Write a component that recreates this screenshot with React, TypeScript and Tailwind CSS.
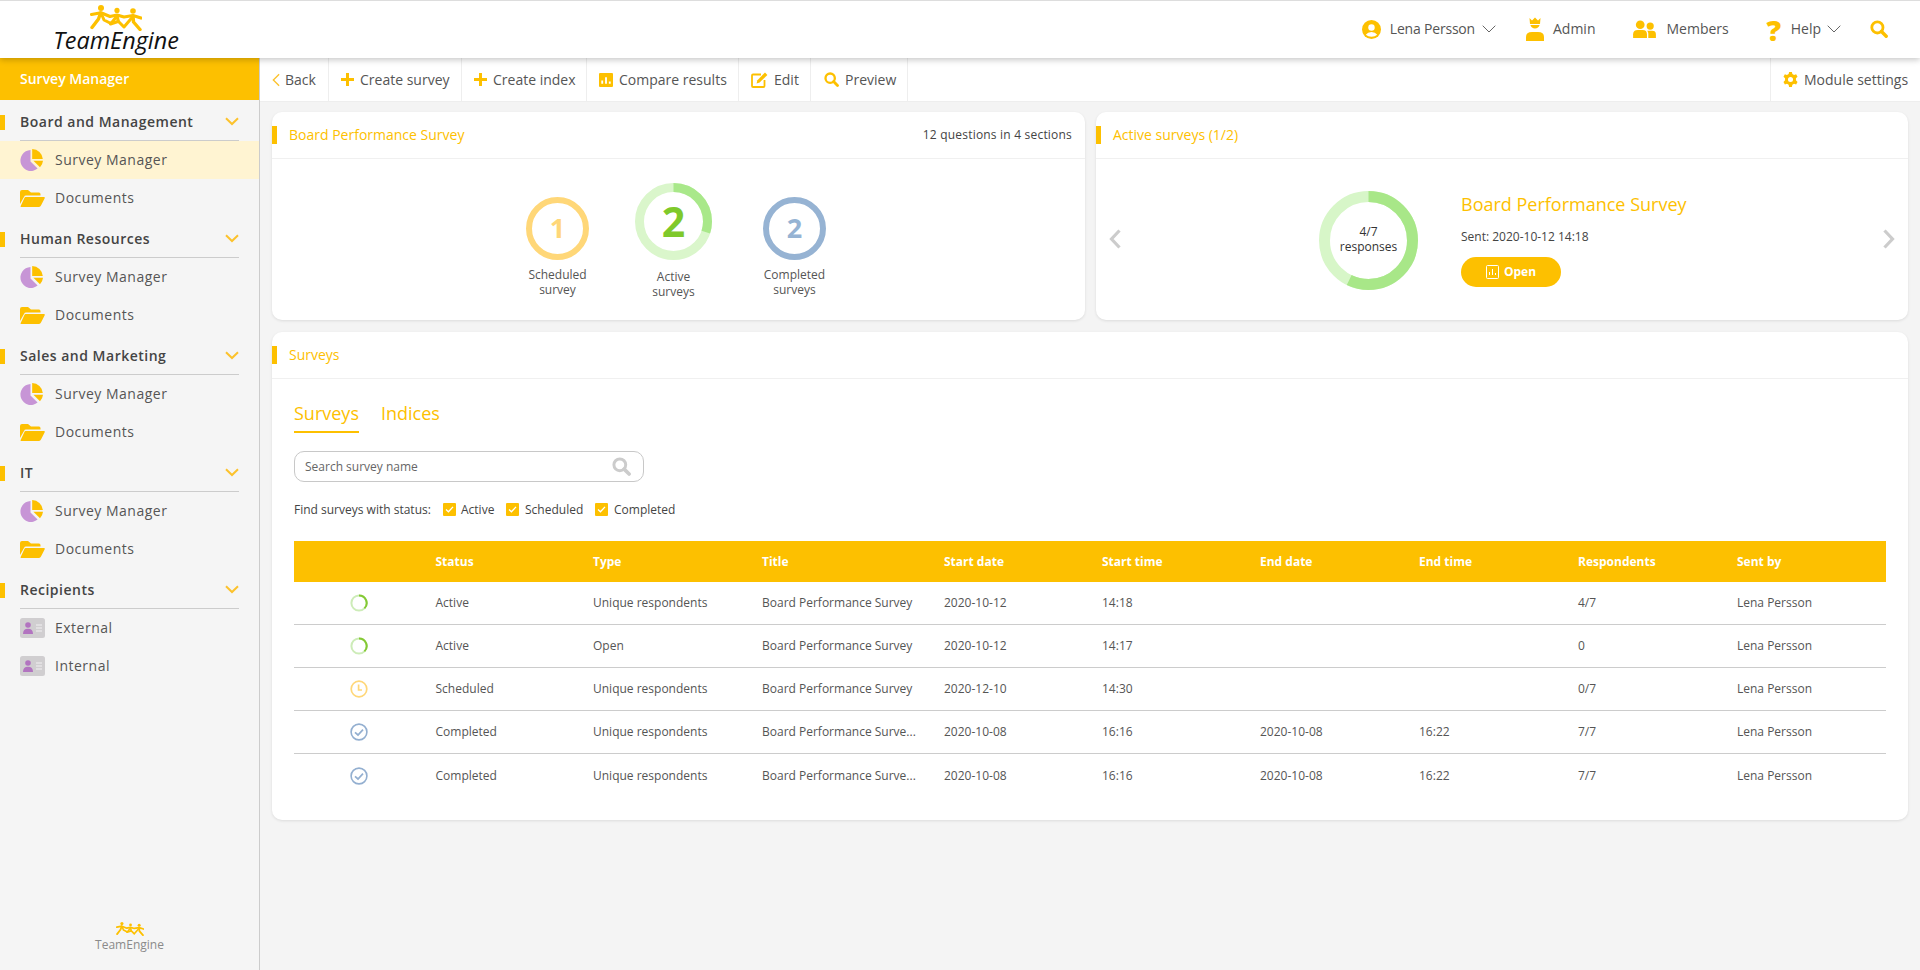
import React from "react";

const Y = "#fdc000";

function Figures({ className }: { className: string }) {
  return (
    <svg viewBox="0 0 52 26" className={className} fill={Y} stroke={Y} strokeLinecap="round" strokeLinejoin="round">
      <circle cx="11" cy="3" r="3" stroke="none" />
      <circle cx="27" cy="5.4" r="2.6" stroke="none" />
      <circle cx="43" cy="6" r="2.8" stroke="none" />
      <path fill="none" strokeWidth="3.2" d="M1.5 9.5 L11 7.8 L20 11.5 L27 10 L34 12 L43 10.5 L51 13" />
      <path fill="none" strokeWidth="3.4" d="M10.5 8 L8.5 14 L2 22.5" />
      <path fill="none" strokeWidth="3" d="M11.5 9 L14 15 L21 18.5 L27 11 L28.5 16.5 L34 22 L42.5 12" />
      <path fill="none" strokeWidth="3" d="M28 16.5 L20.5 19" />
      <path fill="none" strokeWidth="3.4" d="M43 11 L43.5 17 L50 24.5" />
    </svg>
  );
}

function Pie() {
  return (
    <svg viewBox="0 0 24 24" className="w-6 h-6 shrink-0">
      <path d="M10.5 2 A10.5 10.5 0 1 0 17.6 20.6 L10.5 13.6 Z" fill="#c795d6" />
      <path d="M12.2 1 A10.8 10.8 0 0 1 22.8 11 L12.2 11 Z" fill={Y} />
      <path d="M13.4 12.8 L23 12.8 A10.5 10.5 0 0 1 20 19.2 Z" fill={Y} />
    </svg>
  );
}

function Folder() {
  return (
    <svg viewBox="0 0 25 17" className="w-[25px] h-[17px] shrink-0">
      <path d="M0 2 Q0 0 2 0 L8 0 L11 2.6 L19 2.6 Q20.5 2.6 20.5 4.2 L20.5 5.6 L6 5.6 Q4.6 5.6 4 7 L0 14 Z" fill={Y} />
      <path d="M5.5 7 L24 7 Q25.3 7 24.6 8.4 L21 15.6 Q20.4 17 19 17 L1.4 17 Q0.2 17 0.8 15.8 L4.4 8 Q4.8 7 5.5 7 Z" fill={Y} />
    </svg>
  );
}

function IdCard() {
  return (
    <svg viewBox="0 0 25 20" className="w-[25px] h-5 shrink-0">
      <rect width="25" height="20" rx="2.5" fill="#d0ced0" />
      <circle cx="8" cy="7" r="2.8" fill="#b274c0" />
      <path d="M3 16 Q3 10.8 8 10.8 Q13 10.8 13 16 Z" fill="#b274c0" />
      <path d="M16 7 H22 M16 10 H22 M16 13 H22" stroke="#f1f0f1" strokeWidth="1.2" />
    </svg>
  );
}

function Chevron() {
  return (
    <svg viewBox="0 0 14 9" className="w-3.5 h-[9px] shrink-0" fill="none" stroke="#fcc22c" strokeWidth="2">
      <path d="M1 1.2 L7 7 L13 1.2" />
    </svg>
  );
}

function ThinDown() {
  return (
    <svg viewBox="0 0 14 8" className="w-3.5 h-2" fill="none" stroke="#666" strokeWidth="1">
      <path d="M0.7 0.7 L7 7 L13.3 0.7" />
    </svg>
  );
}

function Plus() {
  return (
    <svg viewBox="0 0 14 14" className="w-[13px] h-[13px]" fill={Y}>
      <path d="M5.4 0 H8.6 V5.4 H14 V8.6 H8.6 V14 H5.4 V8.6 H0 V5.4 H5.4 Z" />
    </svg>
  );
}

function Search({ className, color = Y }: { className: string; color?: string }) {
  return (
    <svg viewBox="0 0 18 18" className={className} fill="none" stroke={color}>
      <circle cx="7.4" cy="7.4" r="5.6" strokeWidth="2.8" />
      <path d="M11.5 11.5 L16.2 16.2" strokeWidth="3.4" strokeLinecap="round" />
    </svg>
  );
}

function ToolItem({ icon, label, className }: { icon: React.ReactNode; label: string; className: string }) {
  return (
    <div className={"flex items-center h-full border-r border-[#eeeeee] " + className}>
      {icon}
      <span className="text-sm text-[#555555]">{label}</span>
    </div>
  );
}

function CardHead({ title, right }: { title: string; right?: string }) {
  return (
    <div className="h-[47px] flex items-center justify-between border-b border-[#f0f0f0] relative pl-[17px] pr-[13px] shrink-0">
      <div className="absolute left-0 top-[14px] w-[5px] h-[18px] bg-[#fdc000]" />
      <span className="text-sm text-[#fdc000]">{title}</span>
      {right && <span className="text-xs tracking-[0.2px] text-[#444444]">{right}</span>}
    </div>
  );
}

function Ring({ size, stroke, track, arc, pct }: { size: number; stroke: number; track: string; arc?: string; pct?: number }) {
  const r = (size - stroke) / 2;
  const c = 2 * Math.PI * r;
  return (
    <svg width={size} height={size} className="absolute inset-0 -rotate-90">
      <circle cx={size / 2} cy={size / 2} r={r} fill="none" stroke={track} strokeWidth={stroke} />
      {arc && (
        <circle cx={size / 2} cy={size / 2} r={r} fill="none" stroke={arc} strokeWidth={stroke} strokeDasharray={`${c * (pct || 0)} ${c}`} />
      )}
    </svg>
  );
}

function Group({ title, items, active }: { title: string; items: { icon: React.ReactNode; label: string }[]; active?: boolean }) {
  return (
    <div>
      <div className="h-[41px] relative px-5 flex flex-col">
        <div className="absolute left-0 top-[15px] w-[5px] h-[15px] bg-[#fdc000]" />
        <div className="flex-1 flex items-center justify-between border-b border-[#cccccc] pt-[3px]">
          <span className="text-sm font-semibold text-[#444444] tracking-[0.5px]">{title}</span>
          <Chevron />
        </div>
      </div>
      {items.map((it, i) => (
        <div key={it.label} className={"h-[38px] flex items-center px-5 " + (active && i === 0 ? "bg-[#fff4d2]" : "")}>
          <div className="w-[35px] flex items-center">{it.icon}</div>
          <span className="text-sm text-[#555555] tracking-[0.5px]">{it.label}</span>
        </div>
      ))}
    </div>
  );
}

function Check() {
  return (
    <span className="w-[13px] h-[13px] bg-[#fdc000] rounded-[1px] flex items-center justify-center shrink-0">
      <svg viewBox="0 0 10 8" className="w-[9px] h-[7px]" fill="none" stroke="#ffffff" strokeWidth="1.5">
        <path d="M1 4 L3.8 6.6 L9 1" />
      </svg>
    </span>
  );
}

function StatusIcon({ status }: { status: string }) {
  if (status === "Active")
    return (
      <svg viewBox="0 0 18 18" className="w-[18px] h-[18px]" fill="none" strokeWidth="2">
        <circle cx="9" cy="9" r="7.6" stroke="#cdecb8" />
        <path d="M9 1.4 A7.6 7.6 0 0 1 14.4 14.4" stroke="#84c934" />
      </svg>
    );
  if (status === "Scheduled")
    return (
      <svg viewBox="0 0 18 18" className="w-[18px] h-[18px]" fill="none" stroke="#ffd778" strokeWidth="1.7">
        <circle cx="9" cy="9" r="7.8" />
        <path d="M8.6 4.5 V10 H12" />
      </svg>
    );
  return (
    <svg viewBox="0 0 18 18" className="w-[18px] h-[18px]" fill="none" stroke="#93afd0" strokeWidth="1.6">
      <circle cx="9" cy="9" r="7.9" />
      <path d="M5 9.4 L8 12 L13 6.6" strokeWidth="1.7" />
    </svg>
  );
}

const gridCols = "grid grid-cols-[141.5px_157.5px_169px_182px_158px_158px_159px_159px_159px_1fr]";
const heads = ["", "Status", "Type", "Title", "Start date", "Start time", "End date", "End time", "Respondents", "Sent by"];
const rows = [
  ["Active", "Unique respondents", "Board Performance Survey", "2020-10-12", "14:18", "", "", "4/7"],
  ["Active", "Open", "Board Performance Survey", "2020-10-12", "14:17", "", "", "0"],
  ["Scheduled", "Unique respondents", "Board Performance Survey", "2020-12-10", "14:30", "", "", "0/7"],
  ["Completed", "Unique respondents", "Board Performance Surve...", "2020-10-08", "16:16", "2020-10-08", "16:22", "7/7"],
  ["Completed", "Unique respondents", "Board Performance Surve...", "2020-10-08", "16:16", "2020-10-08", "16:22", "7/7"],
];

export default function App() {
  const pie = <Pie />;
  const folder = <Folder />;
  const sm = [
    { icon: pie, label: "Survey Manager" },
    { icon: folder, label: "Documents" },
  ];
  return (
    <div className="h-[970px] w-full flex flex-col overflow-hidden bg-[#f4f4f4] text-[#555555] font-['Open_Sans',sans-serif]">
      <header className="h-[58px] shrink-0 bg-white border-t border-[#dddddd] shadow-[0_2px_6px_rgba(0,0,0,0.22)] relative z-10 flex items-center pl-[53px] pr-8 pb-[1px]">
        <div className="flex flex-col items-center w-[126px] -mt-[1px]">
          <Figures className="w-[52px] h-[26px]" />
          <span className="italic text-[23.4px] leading-[23px] text-[#111111] -mt-[2px] font-['Open_Sans',sans-serif]">TeamEngine</span>
        </div>
        <div className="ml-auto flex items-center text-sm text-[#555555]">
          <svg viewBox="0 0 20 20" className="w-[19px] h-[19px] mr-[9px]">
            <circle cx="10" cy="10" r="10" fill={Y} />
            <circle cx="10" cy="8" r="3.4" fill="#ffffff" />
            <path d="M4 15.5 Q6 12.6 10 12.6 Q14 12.6 16 15.5 Q13.6 17.6 10 17.6 Q6.4 17.6 4 15.5 Z" fill="#ffffff" />
          </svg>
          <span className="tracking-[-0.2px]">Lena Persson</span>
          <span className="ml-[7px] mr-[30px]"><ThinDown /></span>
          <svg viewBox="0 0 18 24" className="w-[18px] h-[24px] mr-[9px]" fill={Y}>
            <path d="M3.5 1 L6 3.5 L9 0.5 L12 3.5 L14.5 1 L14 7 L4 7 Z" />
            <path d="M4.4 8 H13.6 A4.8 4.8 0 0 1 4.4 8 Z" />
            <path d="M0 24 V20 Q0 15 6 15 H12 Q18 15 18 20 V24 Z" />
          </svg>
          <span>Admin</span>
          <svg viewBox="0 0 24 20" className="w-[23px] h-[19px] ml-[38px] mr-[10px]" fill={Y}>
            <circle cx="7.5" cy="5" r="4.6" />
            <circle cx="18" cy="6.4" r="3.8" />
            <path d="M0 19 V15 Q0 10.5 5 10.5 H10 Q14.6 10.5 14.6 15 V19 Z" />
            <path d="M16 19 V14.5 Q16 12.4 14.8 11.4 H20 Q24 11.4 24 15 V19 Z" />
          </svg>
          <span>Members</span>
          <span className="ml-[38px] mr-[10px] w-[14px] flex justify-center text-[29px] leading-none font-extrabold text-[#fdc000]">?</span>
          <span>Help</span>
          <span className="ml-[6px] mr-[29px]"><ThinDown /></span>
          <Search className="w-[18px] h-[18px]" />
        </div>
      </header>

      <div className="flex-1 flex min-h-0">
        <aside className="w-[260px] shrink-0 bg-[#f5f5f5] border-r border-[#cccccc] flex flex-col">
          <div className="h-[42px] bg-[#fdc000] flex items-center pl-5 text-sm font-semibold text-white shrink-0">Survey Manager</div>
          <Group title="Board and Management" items={sm} active />
          <Group title="Human Resources" items={sm} />
          <Group title="Sales and Marketing" items={sm} />
          <Group title="IT" items={sm} />
          <Group
            title="Recipients"
            items={[
              { icon: <IdCard />, label: "External" },
              { icon: <IdCard />, label: "Internal" },
            ]}
          />
          <div className="mt-auto mb-[16px] flex flex-col items-center">
            <Figures className="w-[28px] h-[14px]" />
            <span className="text-xs leading-[18px] text-[#8a8a8a]">TeamEngine</span>
          </div>
        </aside>

        <main className="flex-1 min-w-0 flex flex-col">
          <div className="h-[44px] shrink-0 bg-white border-b border-[#eeeeee] flex items-center">
            <ToolItem
              className="w-[69px] pl-[12px] gap-[5px]"
              label="Back"
              icon={
                <svg viewBox="0 0 9 15" className="w-2 h-[14px]" fill="none" stroke="#fcc22c" strokeWidth="1.5">
                  <path d="M8 1 L1.5 7.5 L8 14" />
                </svg>
              }
            />
            <ToolItem className="w-[133px] pl-[12px] gap-[6px]" label="Create survey" icon={<Plus />} />
            <ToolItem className="w-[125px] pl-[12px] gap-[6px]" label="Create index" icon={<Plus />} />
            <ToolItem
              className="w-[152px] pl-[12px] gap-[6px]"
              label="Compare results"
              icon={
                <svg viewBox="0 0 13 13" className="w-[14px] h-[14px]">
                  <rect width="13" height="13" rx="1" fill={Y} />
                  <path d="M3 7 V10 M6.5 4 V10 M10 8 V10" stroke="#ffffff" strokeWidth="1.7" />
                </svg>
              }
            />
            <ToolItem
              className="w-[72px] pl-[12px] gap-[6px]"
              label="Edit"
              icon={
                <svg viewBox="0 0 17 16" className="w-[17px] h-4" fill="none">
                  <path d="M10 2.5 H2 Q1 2.5 1 3.5 V14 Q1 15 2 15 H12.5 Q13.5 15 13.5 14 V8" stroke={Y} strokeWidth="1.8" />
                  <path d="M14 0.6 L16.4 3 L8.6 10.6 L5.6 11.4 L6.4 8.2 Z" fill={Y} />
                </svg>
              }
            />
            <ToolItem className="w-[97px] pl-[13px] gap-[6px]" label="Preview" icon={<Search className="w-[15px] h-[15px]" />} />
            <div className="ml-auto h-full w-[150px] border-l border-[#eeeeee] flex items-center pl-[12px] gap-[6px]">
              <svg viewBox="0 0 16 16" className="w-[15px] h-[15px]">
                <path
                  fillRule="evenodd"
                  fill={Y}
                  d="M6.5 0 H9.5 L10 2.2 L11.8 3.2 L14 2.5 L15.5 5 L13.8 6.6 V8.8 L15.5 10.6 L14 13.2 L11.8 12.6 L10 13.7 L9.5 16 H6.5 L6 13.7 L4.2 12.6 L2 13.2 L0.5 10.6 L2.2 8.8 V6.6 L0.5 5 L2 2.5 L4.2 3.2 L6 2.2 Z M8 5.2 A2.7 2.7 0 1 0 8 10.6 A2.7 2.7 0 1 0 8 5.2 Z"
                />
              </svg>
              <span className="text-sm text-[#555555]">Module settings</span>
            </div>
          </div>

          <div className="flex-1 px-3 pt-[10px] flex flex-col gap-3">
            <div className="flex gap-[11px]">
              <section className="w-[813px] h-[208px] bg-white rounded-[10px] shadow-[0_1px_3px_rgba(0,0,0,0.1)] flex flex-col">
                <CardHead title="Board Performance Survey" right="12 questions in 4 sections" />
                <div className="flex-1 flex justify-center items-start">
                  <div className="w-[116px] flex flex-col items-center pt-[38px]">
                    <div className="w-[63px] h-[63px] relative flex items-center justify-center">
                      <Ring size={63} stroke={6} track="#ffd778" />
                      <span className="text-[27px] font-bold text-[#ffd778]">1</span>
                    </div>
                    <div className="text-xs leading-[15px] text-center text-[#555555] mt-[7px] w-[80px]">Scheduled survey</div>
                  </div>
                  <div className="w-[116px] flex flex-col items-center pt-[24px]">
                    <div className="w-[77px] h-[77px] relative flex items-center justify-center">
                      <Ring size={77} stroke={9} track="#daf6cb" arc="#a9e88a" pct={0.3} />
                      <span className="text-[41px] font-bold text-[#7fc92b]">2</span>
                    </div>
                    <div className="text-xs leading-[15px] text-center text-[#555555] mt-[9px] w-[60px]">Active surveys</div>
                  </div>
                  <div className="w-[126px] flex flex-col items-center pt-[38px]">
                    <div className="w-[63px] h-[63px] relative flex items-center justify-center">
                      <Ring size={63} stroke={6} track="#96b3d3" />
                      <span className="text-[27px] font-bold text-[#96b3d3]">2</span>
                    </div>
                    <div className="text-xs leading-[15px] text-center text-[#555555] mt-[7px] w-[80px]">Completed surveys</div>
                  </div>
                </div>
              </section>

              <section className="flex-1 h-[208px] bg-white rounded-[10px] shadow-[0_1px_3px_rgba(0,0,0,0.1)] flex flex-col">
                <CardHead title="Active surveys (1/2)" />
                <div className="flex-1 flex items-center relative">
                  <svg viewBox="0 0 12 20" className="absolute left-[13px] top-[70px] w-3 h-5" fill="none" stroke="#cccccc" strokeWidth="3.2">
                    <path d="M10.5 1.5 L2.5 10 L10.5 18.5" />
                  </svg>
                  <svg viewBox="0 0 12 20" className="absolute right-[13px] top-[70px] w-3 h-5" fill="none" stroke="#cccccc" strokeWidth="3.2">
                    <path d="M1.5 1.5 L9.5 10 L1.5 18.5" />
                  </svg>
                  <div className="ml-[223px] w-[99px] h-[99px] relative flex flex-col items-center justify-center shrink-0 mt-[1px]">
                    <Ring size={99} stroke={11} track="#d7f6c8" arc="#a8e788" pct={4 / 7} />
                    <span className="text-xs leading-[15px] text-[#333333] -mt-[2px]">4/7</span>
                    <span className="text-xs leading-[15px] text-[#333333]">responses</span>
                  </div>
                  <div className="ml-[43px] flex flex-col">
                    <span className="text-lg leading-[24px] text-[#fdc000]">Board Performance Survey</span>
                    <span className="text-xs leading-[16px] text-[#444444] mt-[13px]">Sent: 2020-10-12 14:18</span>
                    <div className="mt-[12px] w-[100px] h-[30px] rounded-full bg-[#fdc000] flex items-center justify-center gap-[5px] text-xs font-bold text-white">
                      <svg viewBox="0 0 13 14" className="w-[13px] h-[14px]" fill="none" stroke="#ffffff">
                        <rect x="0.5" y="0.5" width="12" height="13" rx="1" />
                        <path d="M3.5 10 V7 M6.5 10 V4 M9.5 10 V8" />
                      </svg>
                      Open
                    </div>
                  </div>
                </div>
              </section>
            </div>

            <section className="h-[488px] bg-white rounded-[10px] shadow-[0_1px_3px_rgba(0,0,0,0.1)] flex flex-col">
              <CardHead title="Surveys" />
              <div className="px-[22px] flex flex-col">
                <div className="flex gap-[22px] mt-[21px] h-[33px] text-lg leading-[26px] text-[#fdc000]">
                  <span className="h-[33px] border-b-2 border-[#fdc000]">Surveys</span>
                  <span>Indices</span>
                </div>
                <div className="mt-[18px] w-[350px] h-[31px] rounded-[10px] border border-[#c8c8c8] flex items-center justify-between pl-[10px] pr-[12px]">
                  <span className="text-xs text-[#666666]">Search survey name</span>
                  <Search className="w-[19px] h-[19px]" color="#cccccc" />
                </div>
                <div className="mt-[20px] flex items-center text-xs text-[#444444] h-[15px]">
                  <span className="w-[149px]">Find surveys with status:</span>
                  <Check />
                  <span className="ml-[5px] w-[45px]">Active</span>
                  <Check />
                  <span className="ml-[6px] w-[70px]">Scheduled</span>
                  <Check />
                  <span className="ml-[6px]">Completed</span>
                </div>
                <div className="mt-[24px] w-[1592px]">
                  <div className={gridCols + " h-[41px] items-center bg-[#fdc000] text-xs font-bold text-white"}>
                    {heads.map((h, i) => (
                      <div key={i}>{h}</div>
                    ))}
                  </div>
                  {rows.map((r, i) => (
                    <div key={i} className={gridCols + " h-[43px] items-center text-xs text-[#555555] " + (i < 4 ? "border-b border-[#cccccc]" : "")}>
                      <div className="flex justify-center pr-[11px]">
                        <StatusIcon status={r[0]} />
                      </div>
                      <div>{r[0]}</div>
                      <div>{r[1]}</div>
                      <div>{r[2]}</div>
                      <div>{r[3]}</div>
                      <div>{r[4]}</div>
                      <div>{r[5]}</div>
                      <div>{r[6]}</div>
                      <div>{r[7]}</div>
                      <div>Lena Persson</div>
                    </div>
                  ))}
                </div>
              </div>
            </section>
          </div>
        </main>
      </div>
    </div>
  );
}
